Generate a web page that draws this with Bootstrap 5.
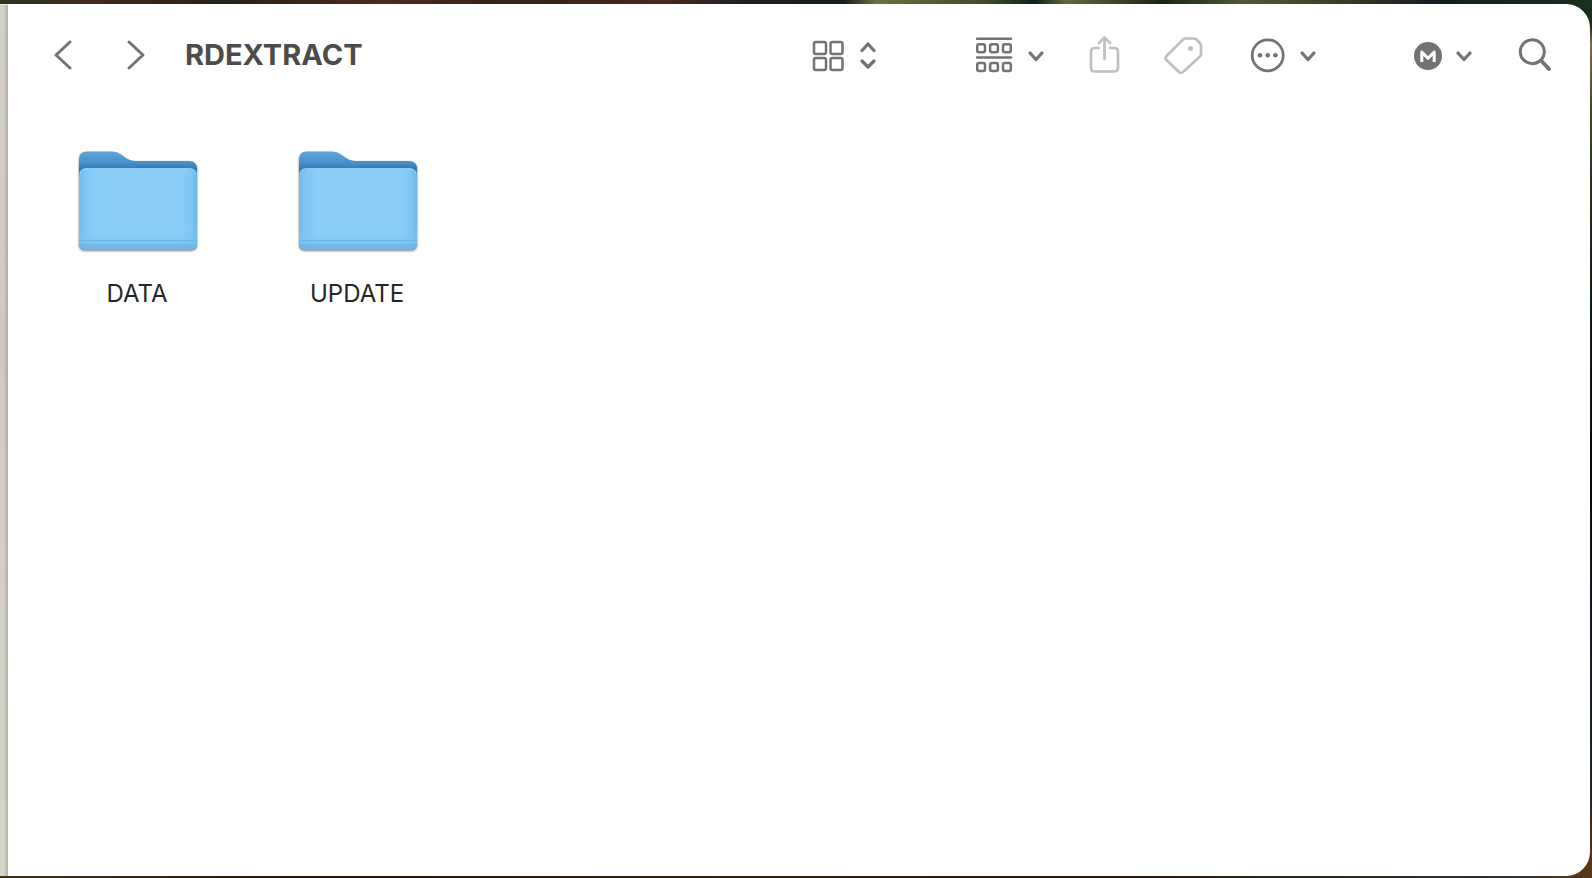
<!DOCTYPE html>
<html lang="en">
<head>
<meta charset="utf-8">
<meta name="viewport" content="width=device-width, initial-scale=1">
<title>RDEXTRACT</title>
<link href="https://cdn.jsdelivr.net/npm/bootstrap@5.3.0/dist/css/bootstrap.min.css" rel="stylesheet">
<style>
  body {
    font-family: Inter, "Liberation Sans", sans-serif;
    padding: 4px 2px 2px 0;
    background:
      linear-gradient(90deg, #2a3420, #41291c 6%, #26211b 14%, #4a2b1c 24%, #33221c 32%, #45271d 42%, #1b2024 47%, #141c20 53%, #6b7040 55%, #3d4a25 62%, #10201a 65%, #5f6a3a 67%, #1a2416 73%, #4c5a30 78%, #3a3f25 84%, #141c22 90%, #1d2c1c) top / 100% 4px no-repeat,
      linear-gradient(90deg, #39331c, #211711 20%, #2c2418 45%, #241c14 70%, #33342e 96%, #5c3419) bottom / 100% 2px no-repeat,
      linear-gradient(#16301c, #1c2c1c 3%, #7d6b4a 5%, #46492c 12%, #2a3420 20%, #0c1813 35%, #050c0a 55%, #141b1e 75%, #222423 90%, #5c3419 98%) right / 24px 100% no-repeat,
      #fff;
  }
  .sidebar-edge { width: 8px; background: linear-gradient(90deg, transparent 50%, rgba(90,90,80,.28)), linear-gradient(#d3d0c5, #cfcabf 40%, #d6cec5 60%, #d0d2c4 80%, #d3d6c6); border-top: 1px solid #eae9e2; }
  .finder-window { border-radius: 0 24px 24px 0; }
  .toolbar { height: 102px; padding: 0 37px 0 44px; color: #737373; }
  .tool { border: 0; padding: 0; background: none; color: inherit; display: flex; }
  .tool:disabled { color: #c0c0c0; }
  .tool svg, .folder svg { display: block; fill: none; }
  .toolbar svg { stroke: currentColor; stroke-width: 3; stroke-linecap: round; stroke-linejoin: round; }
  .tool .solid { fill: currentColor; stroke: none; }
  .tool .caret { stroke-width: 3.3; }
  .history { gap: 49px; }
  .tools { gap: 44px; }
  .section-end { margin-right: 51px; }
  .window-title { font-size: 29px; line-height: 36px; font-weight: 700; color: #4c4c4c; margin: 0 0 0 36px; }
  .files { padding: 45px 19px; }
  .tool.folder { width: 220px; color: #262626; font-size: 24px; line-height: 30px; }
  .folder svg { margin: 0 auto 24px; }
</style>
</head>
<body class="d-flex min-vh-100 m-0">
<svg width="0" height="0" class="position-absolute" aria-hidden="true">
  <defs>
    <linearGradient id="tab" x1="0" y1="0" x2="0" y2="1"><stop offset="0" stop-color="#5fa5d8"/><stop offset=".1" stop-color="#4b93ce"/><stop offset=".18" stop-color="#3178b9"/><stop offset="1" stop-color="#3f88c6"/></linearGradient>
    <linearGradient id="front" x1="0" y1="0" x2="1" y2="0"><stop offset="0" stop-color="#70bbea"/><stop offset=".06" stop-color="#81c7f4"/><stop offset=".16" stop-color="#8acef8"/><stop offset=".86" stop-color="#8acef8"/><stop offset=".95" stop-color="#80c6f3"/><stop offset="1" stop-color="#6cb6e7"/></linearGradient>
    <linearGradient id="foot" x1="0" y1="0" x2="0" y2="1"><stop offset="0" stop-color="#8acef8" stop-opacity="0"/><stop offset="1" stop-color="#72bbe9"/></linearGradient>
    <filter id="drop" x="-10%" y="-10%" width="120%" height="120%"><feDropShadow dx="0" dy="1" stdDeviation="1" flood-color="#000" flood-opacity=".5"/></filter>
    <symbol id="folder" viewBox="-1 0 124 104">
      <g filter="url(#drop)">
        <path fill="url(#tab)" d="M3 94V8.500q0-8 8-8h25q5 0 9 3l5 3.500q4 3 9 3h54q8 0 8 8v75q0 6-7 6H10q-7 0-7-6Z"/>
        <path fill="url(#front)" d="M3 25q0-8 8-8h102q8 0 8 8v66q0 8-8 8H11q-8 0-8-8Z"/>
      </g>
      <path fill="url(#foot)" d="M3 78h118v13q0 8-8 8H11q-8 0-8-8Z"/>
      <path fill="#6bb3e3" d="M3 89h118v1H3Z"/>
      <path fill="#68b1e1" d="M3 93h118q0 6-8 6H11q-8 0-8-6Z" opacity=".6"/>
      <path fill="none" stroke="#8fcdf5" stroke-width="1" d="M4 23q1-5 7-5h102q6 0 7 5"/>
    </symbol>
  </defs>
</svg>
<aside class="sidebar-edge flex-shrink-0"></aside>
<main class="finder-window flex-grow-1 bg-white">
  <header class="toolbar d-flex align-items-center">
    <nav class="history d-flex" aria-label="History">
      <button class="tool" type="button" aria-label="Back"><svg width="24" height="38"><path d="M18 6 4 19l14 13"/></svg></button>
      <button class="tool" type="button" aria-label="Forward"><svg width="24" height="38"><path d="m4 6 14 13L4 32"/></svg></button>
    </nav>
    <h1 class="window-title">RDEXTRACT</h1>
    <div class="tools d-flex ms-auto">
      <button class="tool section-end" type="button" aria-label="Icon view">
        <svg width="68" height="38"><g stroke-width="2.5"><rect x="2" y="6" width="12" height="12" rx="2"/><rect x="18.500" y="6" width="12" height="12" rx="2"/><rect x="2" y="22" width="12" height="12" rx="2"/><rect x="18.500" y="22" width="12" height="12" rx="2"/></g><path class="caret" d="m50 14.500 6-6.500 6 6.500M50 25l6 6 6-6"/></svg>
      </button>
      <button class="tool" type="button" aria-label="Group by">
        <svg width="70" height="38"><g stroke-width="2.500"><path d="M2 2.700h34M2 21.500h34"/><rect x="2.200" y="8.300" width="7.800" height="8" rx="2"/><rect x="15.100" y="8.300" width="7.800" height="8" rx="2"/><rect x="28" y="8.300" width="7.800" height="8" rx="2"/><rect x="2.200" y="27" width="7.800" height="8" rx="2"/><rect x="15.100" y="27" width="7.800" height="8" rx="2"/><rect x="28" y="27" width="7.800" height="8" rx="2"/></g><path class="caret" d="m55 17 6 6.500 6-6.500"/></svg>
      </button>
      <button class="tool" type="button" aria-label="Share" disabled>
        <svg width="31" height="38"><g stroke-width="2.700"><path stroke-linecap="butt" d="M11 12H6q-4 0-4 4v15.500q0 4 4 4h19q4 0 4-4V16q0-4-4-4h-5"/><path d="M15.500 23V2M10 7l5.500-5.500L21 7" /></g></svg>
      </button>
      <button class="tool" type="button" aria-label="Edit tags" disabled>
        <svg width="40" height="38"><path stroke-width="2.700" d="M21.500 2.500h8q2 0 3 1l3.500 4q1 1 1 2.500v8q0 1.500-1 2.500L19 36q-2 2-4 0L2.500 24q-2-2 0-4L19 3.500q1-1 2.500-1Z"/><circle class="solid" cx="26.500" cy="12.500" r="2.500"/></svg>
      </button>
      <button class="tool section-end" type="button" aria-label="More actions">
        <svg width="70" height="38"><circle cx="19.700" cy="19.300" r="15.500" stroke-width="2.700"/><g class="solid"><circle cx="12" cy="19.300" r="2.300"/><circle cx="19.700" cy="19.300" r="2.300"/><circle cx="27.400" cy="19.300" r="2.300"/></g><path class="caret" d="m54 17 6 6.500 6-6.500"/></svg>
      </button>
      <button class="tool" type="button" aria-label="MEGA">
        <svg width="61" height="38"><circle class="solid" cx="15" cy="20" r="14"/><path stroke="#fff" stroke-width="3" stroke-linecap="butt" d="M8.800 26v-9.900l6.200 6.200 6.200-6.200V26"/><path class="caret" d="m45 17 6 6.500 6-6.500"/></svg>
      </button>
      <button class="tool" type="button" aria-label="Search">
        <svg width="35" height="38"><circle cx="14.300" cy="15.700" r="12"/><path stroke-width="3.900" d="m23.500 25 7.500 8"/></svg>
      </button>
    </div>
  </header>
  <section class="files d-flex flex-wrap" aria-label="Files">
    <button class="tool folder flex-column align-items-center" type="button"><svg width="124" height="104"><use href="#folder"/></svg><span>DATA</span></button>
    <button class="tool folder flex-column align-items-center" type="button"><svg width="124" height="104"><use href="#folder"/></svg><span>UPDATE</span></button>
  </section>
</main>
<script src="https://cdn.jsdelivr.net/npm/bootstrap@5.3.0/dist/js/bootstrap.bundle.min.js"></script>
</body>
</html>
